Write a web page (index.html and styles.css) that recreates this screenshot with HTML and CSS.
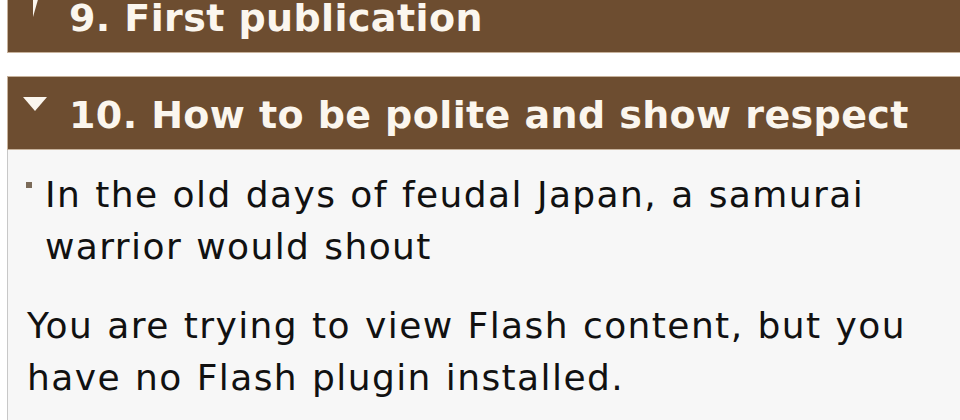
FILE: index.html
```html
<!DOCTYPE html>
<html lang="en">
<head>
<meta charset="utf-8">
<title>Sections</title>
<link rel="stylesheet" href="styles.css">
</head>
<body>
<div class="page">
  <section class="section">
    <h2 class="section-head">
      <svg class="toggle" viewBox="0 0 56 72" width="56" height="72" aria-hidden="true">
        <polygon points="25,8 31,16 25,37" fill="#fbf6ee"/>
      </svg>
      <span class="section-title">9. First publication</span>
    </h2>
  </section>
  <section class="section section-open">
    <h2 class="section-head">
      <svg class="toggle" viewBox="0 0 56 72" width="56" height="72" aria-hidden="true">
        <polygon points="15,20 39,20 27,34" fill="#fbf6ee"/>
      </svg>
      <span class="section-title">10. How to be polite and show respect</span>
    </h2>
    <div class="section-body">
      <ul class="bullets">
        <li>In the old days of feudal Japan, a samurai warrior would shout</li>
      </ul>
      <p class="notice">You are trying to view Flash content, but you have no Flash plugin installed.</p>
    </div>
  </section>
</div>
</body>
</html>
```
FILE: styles.css
```css
html, body {
  margin: 0;
  padding: 0;
  background: #ffffff;
  overflow: hidden;
}
body {
  font-family: "DejaVu Sans", Verdana, sans-serif;
  color: #111111;
}
.page {
  margin-top: -21px;
  margin-left: 7px;
}
.section {
  margin-bottom: 23px;
}
.section-head {
  margin: 0;
  display: flex;
  align-items: flex-start;
  height: 72px;
  background: #6d4d30;
  border: 1px solid #c7b29c;
  border-right: none;
  color: #fbf6ee;
  font-size: 38px;
  font-weight: bold;
  line-height: 40px;
  letter-spacing: 0.4px;
  white-space: nowrap;
}
.toggle {
  flex: none;
  display: block;
}
.section-title {
  margin-top: 18px;
  margin-left: 5px;
}
.section-body {
  background: #f7f7f7;
  border-left: 1px solid #c8c8c8;
  padding: 19px 0 40px 19px;
  font-size: 36px;
  line-height: 52px;
  letter-spacing: 1.4px;
  word-spacing: 1.2px;
}
.bullets {
  margin: 0 0 27px 0;
  padding: 0 0 0 18px;
  list-style: none;
}
.bullets li {
  position: relative;
}
.bullets li::before {
  content: "";
  position: absolute;
  left: -19px;
  top: 13px;
  width: 6px;
  height: 6px;
  background: #7b6b59;
}
.notice {
  margin: 0;
}
```
